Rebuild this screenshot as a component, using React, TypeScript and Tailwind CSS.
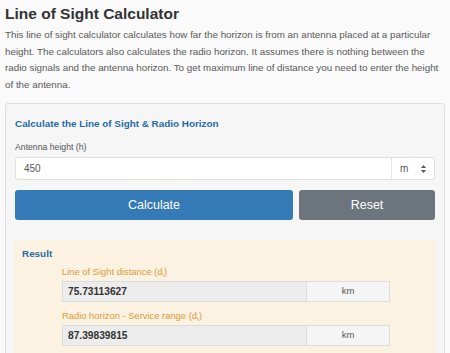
function ResultField({ value, unit }: { value: string; unit: string }) {
  return (
    <div className="flex h-[21px] border border-[#dcdcdc]">
      <div className="flex-1 flex items-center pl-[5px] bg-[#ececec] text-[10.2px] font-bold text-[#333]">{value}</div>
      <div className="w-[83px] flex items-center justify-center border-l border-[#dcdcdc] bg-[#f5f5f5] text-[9.5px] text-[#555]">
        {unit}
      </div>
    </div>
  )
}

export default function App() {
  return (
    <div className="w-[450px] h-[353px] overflow-hidden bg-[#fafafa] px-[5px] pt-[4px] font-['Liberation_Sans',Arial,sans-serif]">
      <h1 className="text-[15.5px] leading-[20px] font-bold text-[#333]">Line of Sight Calculator</h1>
      <p className="mt-[3px] text-[9.8px] leading-[16.5px] text-[#595959]">
        This line of sight calculator calculates how far the horizon is from an antenna placed at a particular
        height. The calculators also calculates the radio horizon. It assumes there is nothing between the radio
        signals and the antenna horizon. To get maximum line of distance you need to enter the height of the
        antenna.
      </p>

      <div className="mt-[10px] border border-[#dedede] rounded-[3px] bg-[#f6f6f6] px-[9px] pt-[13px] pb-4">
        <h2 className="text-[9.9px] leading-[14px] font-bold text-[#1f6ca6]">
          Calculate the Line of Sight &amp; Radio Horizon
        </h2>
        <label className="block mt-[9px] text-[8.7px] leading-[14px] text-[#555]">Antenna height (h)</label>

        <div className="mt-[3px] flex h-[23px] border border-[#dedede] rounded-[3px] bg-white">
          <div className="flex-1 flex items-center pl-[8px] text-[10px] text-[#555]">450</div>
          <div className="w-[43px] flex items-center justify-between pl-[8px] pr-[8px] border-l border-[#e4e4e4] text-[10px] text-[#555]">
            <span>m</span>
            <svg width="5" height="8" viewBox="0 0 5 8">
              <path d="M2.5 0 L5 3 H0 Z M2.5 8 L5 5 H0 Z" fill="#555" />
            </svg>
          </div>
        </div>

        <div className="mt-[10px] flex gap-[6px]">
          <button className="flex-1 h-[30px] rounded-[3px] bg-[#337ab7] text-white text-[12.5px]">Calculate</button>
          <button className="w-[136px] h-[30px] rounded-[3px] bg-[#6c757d] text-white text-[12.5px]">Reset</button>
        </div>

        <div className="mt-[20px] -mx-px bg-[#fcf2e2] pl-[8px] pt-[7px] pb-4">
          <h3 className="text-[9.9px] leading-[14px] font-bold text-[#1f6ca6]">Result</h3>
          <div className="ml-[40px] w-[328px]">
            <div className="mt-[4px] text-[9.4px] leading-[14px] text-[#e09b36]">
              Line of Sight distance (d<sub className="text-[6px]">l</sub>)
            </div>
            <div className="mt-[2px]">
              <ResultField value="75.73113627" unit="km" />
            </div>
            <div className="mt-[7px] text-[9.4px] leading-[14px] text-[#e09b36]">
              Radio horizon - Service range (d<sub className="text-[6px]">r</sub>)
            </div>
            <div className="mt-[2px]">
              <ResultField value="87.39839815" unit="km" />
            </div>
          </div>
        </div>
      </div>
    </div>
  )
}
